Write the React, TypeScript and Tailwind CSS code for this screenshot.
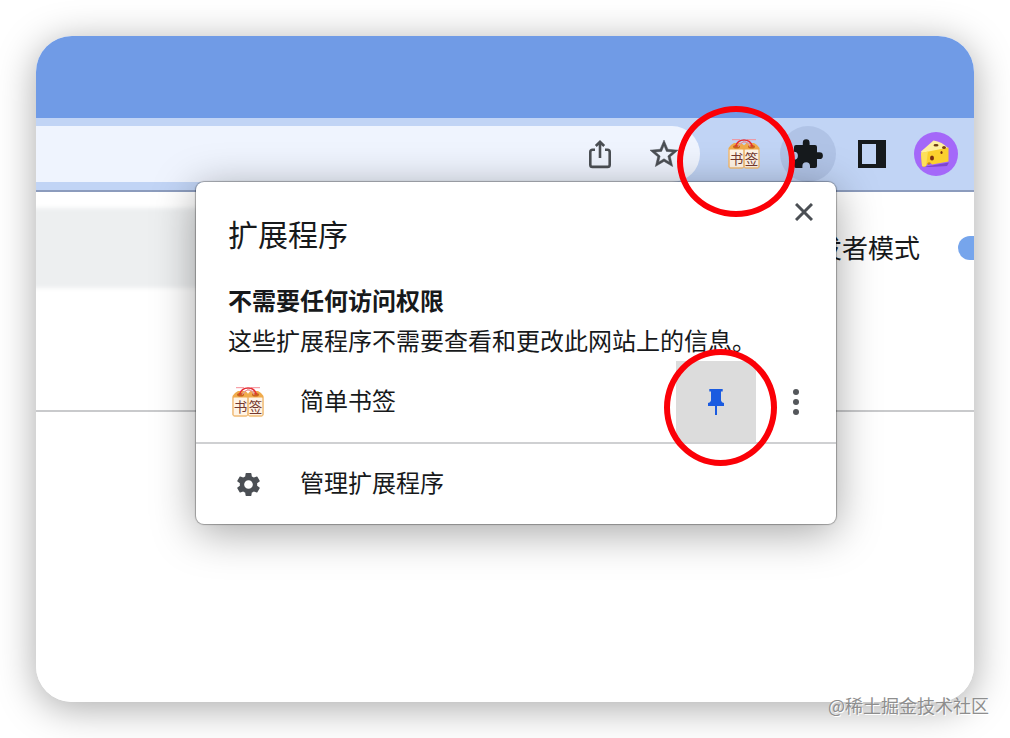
import type { ReactNode } from "react";
import { MdSettings } from "react-icons/md";

function BookmarkTags() {
  return (
    <svg viewBox="0 0 32 32" className="size-8 shrink-0" aria-hidden="true">
      <path d="M3 7 6 5H13.500L16 7.500V28.500Q16 30.500 14 30.500H2.500Q.5 30.500 .5 28.500V10Z" fill="#f0ab4c" />
      <path d="M18.500 5H26L29 7 31.500 10V28.500Q31.500 30.500 29.500 30.500H18Q16 30.500 16 28.500V7.500Z" fill="#f0ab4c" />
      <rect x="1.500" y="11.500" width="13.800" height="18" rx="1" fill="#fff4e6" />
      <rect x="16.700" y="11.500" width="13.800" height="18" rx="1" fill="#fff4e6" />
      <path d="M.8 11V28.500Q1 30 3 30H14Q16 30 16 28V11M16 28Q16 30 18 30H29Q31.200 30 31.200 28V11" fill="none" stroke="#f0c48c" strokeWidth="1" />
      <ellipse cx="8.500" cy="8.800" rx="3.500" ry="1.800" fill="#c8641c" />
      <ellipse cx="23.500" cy="8.800" rx="3.500" ry="1.800" fill="#c8641c" />
      <path d="M4 1.700H12M19 1.700H28" stroke="#f58d95" strokeWidth="1" />
      <path d="M7.500 8.500Q9.500 2 16 2T24.500 8.500" fill="none" stroke="#e62f37" strokeWidth="1.600" />
      <path d="M10 9Q11.500 4.300 16 4.300T22 9V6L16 3Z" fill="#c9d3ea" stroke="#f07f78" strokeWidth=".6" />
      <text x="1.700" y="25.800" fontSize="13.500" fontFamily="'Noto Sans CJK SC', sans-serif" fill="#74382f">书</text>
      <text x="16.700" y="25.800" fontSize="13.500" fontFamily="'Noto Sans CJK SC', sans-serif" fill="#74382f">签</text>
    </svg>
  );
}

function ShareIcon() {
  return (
    <svg viewBox="0 0 28 30" className="h-[30px] w-7" fill="none" stroke="#4b4f54" strokeWidth="2.600" aria-hidden="true">
      <path d="M9 10.800H6.500Q4.300 10.800 4.300 13V25.700Q4.300 27.900 6.500 27.900H21.500Q23.700 27.900 23.700 25.700V13Q23.700 10.800 21.500 10.800H19" />
      <path d="M14 19V3M9.800 7 14 2.800 18.200 7" />
    </svg>
  );
}

function StarIcon() {
  return (
    <svg viewBox="2 2 20 20" className="size-7" fill="#4b4f54" stroke="#4b4f54" strokeWidth=".35" aria-hidden="true">
      <path d="M22 9.240l-7.190-.620L12 2 9.190 8.630 2 9.240l5.460 4.730L5.820 21 12 17.270 18.180 21l-1.630-7.030L22 9.240zM12 15.400l-3.760 2.270 1-4.280-3.320-2.880 4.380-.380L12 6.100l1.710 4.040 4.380.380-3.320 2.880 1 4.280L12 15.400z" />
    </svg>
  );
}

function PuzzleIcon() {
  return (
    <svg viewBox="0 0 30 30" className="size-[30px]" fill="#161a1d" aria-hidden="true">
      <path d="M3 6H9.800V3.700A3.400 3.400 0 0 1 16.600 3.700V6H22Q24 6 24 8V13.300H26.500A3.400 3.400 0 0 1 26.500 20.100H24V27Q24 29 22 29H17V27A3.800 3.800 0 0 0 9.400 27V29H3Q1 29 1 27V20.600A3.900 3.900 0 0 0 1 12.800V8Q1 6 3 6Z" />
    </svg>
  );
}

function SidePanelIcon() {
  return (
    <svg viewBox="0 0 28 28" className="size-7" aria-hidden="true">
      <path fillRule="evenodd" d="M0 0H28V28H0ZM4 4V24H18V4Z" fill="#161a1d" />
    </svg>
  );
}

function CheeseAvatar() {
  return (
    <svg viewBox="0 0 44 44" className="size-11" aria-hidden="true">
      <circle cx="22" cy="22" r="22" fill="#a468f9" />
      <path d="M9 35 35 30.500 33 34 16 35Z" fill="#7f45cf" />
      <path d="M7 19.500 19.500 8.500Q28 9.500 34.500 16.500L8 22Z" fill="#fff0a0" />
      <path d="M7 21 34.500 15.500V29.500L18 32.500Q16.500 29.500 13.500 31.500 12.500 35 9.500 35L8 34Z" fill="#fbd02d" />
      <path d="M7 21 14 19.600 12 34 8 34Z" fill="#fde05b" />
      <ellipse cx="22" cy="13.300" rx="2.500" ry="1.300" fill="#6b3a12" />
      <ellipse cx="30" cy="15.500" rx="1.900" ry="1.500" fill="#7a4213" />
      <ellipse cx="18" cy="26" rx="2" ry="2.500" fill="#7a2f12" />
      <ellipse cx="27.500" cy="20.500" rx="1.100" ry="1.500" fill="#7a2f12" />
      <path d="M17 31Q14 29 13.300 32L15 33Z" fill="#c98413" />
    </svg>
  );
}

function PinIcon() {
  return (
    <svg viewBox="0 0 16 26" className="h-[26px] w-4" fill="#1a5be0" aria-hidden="true">
      <path d="M1.300 0H14.700V2.500H13V11.500Q13.500 13.500 16 14V17H9V26H7V17H0V14Q2.500 13.500 3 11.500V2.500H1.300Z" />
    </svg>
  );
}

function MenuRow({ icon, children }: { icon: ReactNode; children: ReactNode }) {
  return (
    <button className="flex flex-1 items-center gap-8 self-stretch pl-8 text-left text-2xl">
      <span className="flex w-10 justify-center">{icon}</span>
      <span className="pb-1">{children}</span>
    </button>
  );
}

function ExtensionsMenu() {
  return (
    <section
      aria-labelledby="menu-title"
      className="absolute top-[146px] right-[138px] w-[640px] rounded-lg bg-white shadow-[0_0_1px_1px_rgba(0,0,0,0.3),0_8px_44px_rgba(0,0,0,0.36)]"
    >
      <div className="flex items-start justify-between pl-8 pr-5 pt-[18px]">
        <h1 id="menu-title" className="pt-[13px] text-[30px] leading-10">扩展程序</h1>
        <button aria-label="关闭" className="flex size-6 items-center justify-center">
          <svg viewBox="0 0 18 18" className="size-[18px]" stroke="#4b4f54" strokeWidth="3" aria-hidden="true">
            <path d="M1 1 17 17M17 1 1 17" />
          </svg>
        </button>
      </div>
      <div className="px-8 pt-[27px] pb-px text-2xl leading-10">
        <h2 className="font-bold">不需要任何访问权限</h2>
        <p>这些扩展程序不需要查看和更改此网站上的信息。</p>
      </div>

      <div className="flex items-center border-b-2 border-[#cfd0d2]">
        <MenuRow icon={<BookmarkTags />}>简单书签</MenuRow>
        <button aria-label="取消固定" className="flex h-[81px] w-20 items-center justify-center bg-[#dcdcdc]">
          <PinIcon />
        </button>
        <button aria-label="更多操作" className="flex size-20 items-center justify-center">
          <svg viewBox="0 0 6 26" className="h-[26px] w-[6px]" fill="#54575b" aria-hidden="true">
            <circle cx="3" cy="3" r="3" />
            <circle cx="3" cy="13" r="3" />
            <circle cx="3" cy="23" r="3" />
          </svg>
        </button>
      </div>
      <div className="flex h-20 items-center">
        <MenuRow icon={<MdSettings className="size-[29px] text-[#4b4f54]" />}>管理扩展程序</MenuRow>
      </div>

      <span className="pointer-events-none absolute top-[167px] right-[59px] h-[117px] w-[113px] rounded-[50%] border-[6px] border-[#fb0007]" />
    </section>
  );
}

export default function App() {
  return (
    <div className="relative flex min-h-screen flex-col bg-white p-9 font-['Noto_Sans_CJK_SC',sans-serif] text-[#17191b]">
      <div className="flex flex-1 flex-col rounded-[36px] shadow-[0_6px_38px_rgba(0,0,0,0.34)]">
        <div className="relative flex flex-1 flex-col overflow-hidden rounded-[36px] bg-white">
          <div className="h-[82px] bg-[#709be6]" />

          <div className="flex h-[74px] items-center border-b-2 border-[#8c9cbd] bg-[#c1d4f5] pr-4">
            <div className="flex h-14 flex-1 items-center gap-9 rounded-r-full bg-[#eff4fe] pr-[22px]">
              <input aria-label="地址栏" className="h-full min-w-0 flex-1 bg-transparent px-4 text-2xl outline-none" />
              <button aria-label="分享"><ShareIcon /></button>
              <button aria-label="添加书签"><StarIcon /></button>
            </div>
            <button aria-label="简单书签" className="ml-7"><BookmarkTags /></button>
            <button aria-label="扩展程序" className="ml-5 flex size-14 items-center justify-center rounded-full bg-[#b0c3e6]">
              <PuzzleIcon />
            </button>
            <button aria-label="侧边栏" className="ml-[22px]"><SidePanelIcon /></button>
            <button aria-label="个人资料" className="ml-7"><CheeseAvatar /></button>
          </div>

          <div className="flex h-[220px] items-start justify-between border-b-2 border-[#c9cacc] pt-4">
            <div className="-ml-2 h-20 w-[240px] bg-[#edeff0] blur-[2px]" />
            <label className="flex h-20 items-center gap-[38px] text-[26px]">
              <span className="pb-1">开发者模式</span>
              <input type="checkbox" defaultChecked className="-mr-6 h-6 w-10 appearance-none rounded-full bg-[#76a5ec]" />
            </label>
          </div>

          <ExtensionsMenu />
          <span className="pointer-events-none absolute top-[70px] right-[179px] h-[111px] w-[118px] rounded-[50%] border-[6px] border-[#fb0007]" />
        </div>
      </div>
      <p className="absolute right-[21px] bottom-[21px] text-lg leading-6 text-[#8e8e8e] [text-shadow:1px_1px_0_#ffffff]">@稀土掘金技术社区</p>
    </div>
  );
}
